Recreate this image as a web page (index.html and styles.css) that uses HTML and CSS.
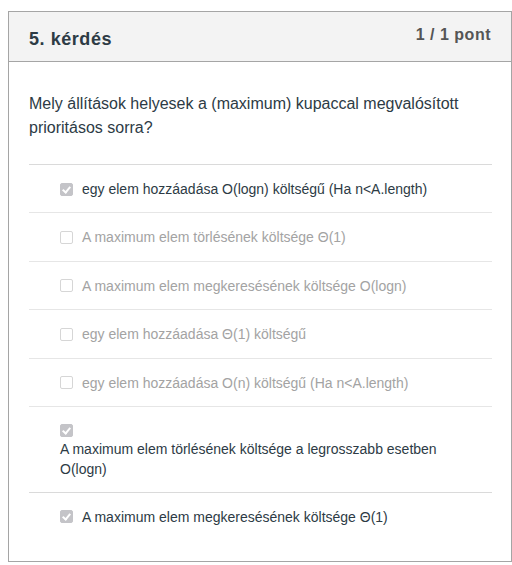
FILE: index.html
```html
<!DOCTYPE html>
<html lang="hu">
<head>
<meta charset="utf-8">
<link rel="stylesheet" href="styles.css">
</head>
<body>
<div class="card">
  <div class="card-header">
    <h2 class="title">5. kérdés</h2>
    <div class="points">1 / 1 pont</div>
  </div>
  <div class="card-body">
    <p class="question">Mely állítások helyesek a (maximum) kupaccal megvalósított prioritásos sorra?</p>
    <ul class="answers">
      <li class="answer checked"><span class="box"></span><span class="label">egy elem hozzáadása O(logn) költségű (Ha n&lt;A.length)</span></li>
      <li class="answer"><span class="box"></span><span class="label">A maximum elem törlésének költsége Θ(1)</span></li>
      <li class="answer"><span class="box"></span><span class="label">A maximum elem megkeresésének költsége O(logn)</span></li>
      <li class="answer"><span class="box"></span><span class="label">egy elem hozzáadása Θ(1) költségű</span></li>
      <li class="answer"><span class="box"></span><span class="label">egy elem hozzáadása O(n) költségű (Ha n&lt;A.length)</span></li>
      <li class="answer checked wrap"><span class="box"></span><span class="label">A maximum elem törlésének költsége a legrosszabb esetben O(logn)</span></li>
      <li class="answer checked"><span class="box"></span><span class="label">A maximum elem megkeresésének költsége Θ(1)</span></li>
    </ul>
  </div>
</div>
</body>
</html>
```
FILE: styles.css
```css
html, body {
  margin: 0;
  padding: 0;
  background: #fff;
}
body {
  padding: 11px 0 0 8px;
  font-family: "Liberation Sans", Arial, sans-serif;
  color: #2d3b45;
}
.card {
  box-sizing: border-box;
  width: 504px;
  height: 551px;
  border: 1px solid #a5a5a5;
}
.card-header {
  display: flex;
  justify-content: space-between;
  align-items: flex-start;
  height: 50px;
  background: #f3f3f3;
  border-bottom: 1px solid #a5a5a5;
  padding: 0 20px 0 20px;
  box-sizing: border-box;
}
.title {
  margin: 16px 0 0;
  font-size: 18px;
  letter-spacing: 0.55px;
  font-weight: bold;
  line-height: 22px;
  color: #2d3b45;
}
.points {
  margin-top: 13px;
  font-size: 16px;
  letter-spacing: 0.5px;
  font-weight: bold;
  line-height: 20px;
  color: #555;
}
.card-body {
  padding: 30px 19px 0 20px;
}
.question {
  margin: 0 0 24px;
  font-size: 16px;
  line-height: 24px;
  color: #2d3b45;
}
.answers {
  list-style: none;
  margin: 0;
  padding: 0;
  border-top: 1px solid #dadada;
}
.answer {
  display: flex;
  align-items: center;
  padding: 14px 0 13.4px 31px;
  font-size: 14px;
  line-height: 20px;
  color: #a3a3a3;
  border-bottom: 1px solid #e6e6e6;
}
.answer:last-child {
  border-bottom: none;
}
.answer.checked {
  color: #2d3b45;
}
.box {
  flex: none;
  width: 13px;
  height: 13px;
  box-sizing: border-box;
  border: 1px solid #d6d6d6;
  border-radius: 2px;
  background: #fff;
  margin-right: 9px;
  position: relative;
}
.checked .box {
  border-color: #c4c4c8;
  background: #c4c4c8;
}
.checked .box::after {
  content: "";
  position: absolute;
  left: 3px;
  top: 1px;
  width: 3px;
  height: 6px;
  border: solid #fff;
  border-width: 0 2px 2px 0;
  transform: rotate(40deg);
}
.answer.wrap {
  display: block;
  padding: 17px 40px 13px 31px;
  border-bottom-color: #dadada;
}
.wrap .box {
  display: block;
  margin-bottom: 2px;
}
.wrap .label {
  display: block;
}
```
